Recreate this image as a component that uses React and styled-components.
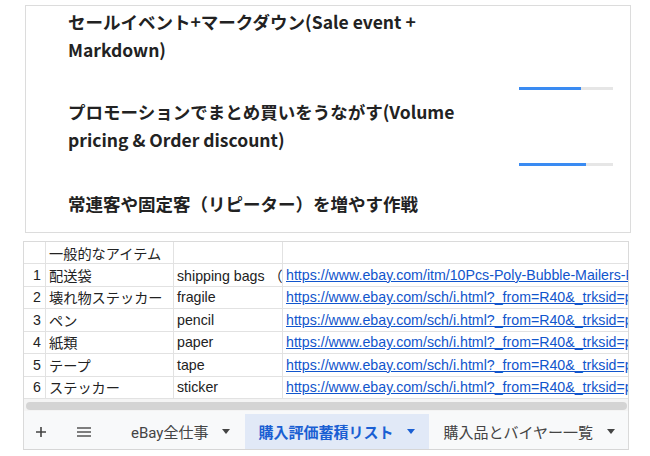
import styled, { createGlobalStyle } from "styled-components";

const GlobalStyle = createGlobalStyle`
  body {
    margin: 0;
    background: #fff;
    font-family: "Liberation Sans", "Noto Sans CJK JP", sans-serif;
  }
`;

const sections = [
  {
    title: "セールイベント+マークダウン(Sale event + Markdown)",
    progress: 66,
    top: 0,
    barGap: 23,
  },
  {
    title: "プロモーションでまとめ買いをうながす(Volume pricing & Order discount)",
    progress: 71,
    top: 8,
    barGap: 9,
  },
  {
    title: "常連客や固定客（リピーター）を増やす作戦",
    top: 24,
  },
];

const rows = [
  { n: 1, ja: "配送袋", en: "shipping bags （緩衝材付き封筒）", url: "https://www.ebay.com/itm/10Pcs-Poly-Bubble-Mailers-Padded-Envelopes" },
  { n: 2, ja: "壊れ物ステッカー", en: "fragile", url: "https://www.ebay.com/sch/i.html?_from=R40&_trksid=p2380057" },
  { n: 3, ja: "ペン", en: "pencil", url: "https://www.ebay.com/sch/i.html?_from=R40&_trksid=p2380057" },
  { n: 4, ja: "紙類", en: "paper", url: "https://www.ebay.com/sch/i.html?_from=R40&_trksid=p2380057" },
  { n: 5, ja: "テープ", en: "tape", url: "https://www.ebay.com/sch/i.html?_from=R40&_trksid=p2380057" },
  { n: 6, ja: "ステッカー", en: "sticker", url: "https://www.ebay.com/sch/i.html?_from=R40&_trksid=p2380057" },
];

const tabs = [
  { label: "eBay全仕事", right: 15 },
  { label: "購入評価蓄積リスト", active: true, right: 14 },
  { label: "購入品とバイヤー一覧", right: 13 },
];

const App = () => {
  return (
    <>
      <GlobalStyle />
      <Page>
        <Card>
          {sections.map((s, i) => (
            <Section key={i} $top={s.top}>
              <Title>{s.title}</Title>
              {s.progress && (
                <BarRow $gap={s.barGap}>
                  <Bar>
                    <BarFill style={{ width: `${s.progress}%` }} />
                  </Bar>
                </BarRow>
              )}
            </Section>
          ))}
        </Card>

        <Sheet>
          <Grid>
            <Row $head>
              <NumCell />
              <Cell>一般的なアイテム</Cell>
              <Cell />
              <Cell />
            </Row>
            {rows.map((r) => (
              <Row key={r.n}>
                <NumCell>{r.n}</NumCell>
                <Cell>{r.ja}</Cell>
                <Cell>{r.en}</Cell>
                <Cell>
                  <LinkText>{r.url}</LinkText>
                </Cell>
              </Row>
            ))}
          </Grid>
          <Track>
            <Thumb />
          </Track>
          <TabBar>
            <IconBtn>
              <svg width="12" height="12" viewBox="0 0 12 12">
                <path d="M6 1v10M1 6h10" stroke="#444" strokeWidth="1.6" />
              </svg>
            </IconBtn>
            <IconBtn>
              <svg width="16" height="12" viewBox="0 0 16 12">
                <path d="M1 2h14M1 6h14M1 10h14" stroke="#555" strokeWidth="1.4" />
              </svg>
            </IconBtn>
            {tabs.map((t) => (
              <Tab key={t.label} $active={t.active} $right={t.right}>
                {t.label}
                <Caret $active={t.active} />
              </Tab>
            ))}
          </TabBar>
        </Sheet>
      </Page>
    </>
  );
};

export default App;

const Page = styled.div`
  width: 650px;
  height: 456px;
  padding-top: 5px;
  box-sizing: border-box;
`;

const Card = styled.div`
  box-sizing: border-box;
  width: 606px;
  height: 228px;
  margin-left: 25px;
  padding: 2px 17px 0 42px;
  border: 1px solid #dcdcdc;
  font-family: "Noto Sans CJK JP", "Noto Sans", sans-serif;
`;

const Section = styled.div`
  display: flex;
  flex-direction: column;
  margin-top: ${(p) => p.$top}px;
`;

const Title = styled.div`
  max-width: 400px;
  font-size: 17.5px;
  line-height: 28px;
  font-weight: 700;
  color: #222;
`;

const BarRow = styled.div`
  display: flex;
  justify-content: flex-end;
  margin-top: ${(p) => p.$gap}px;
`;

const Bar = styled.div`
  width: 94px;
  height: 3px;
  background: #e6e6e6;
`;

const BarFill = styled.div`
  height: 100%;
  background: #3a8bf2;
`;

const Sheet = styled.div`
  box-sizing: border-box;
  width: 606px;
  margin: 8px 0 0 23px;
  border: 1px solid #dadada;
  border-bottom-color: #d6d6d6;
`;

const Grid = styled.div`
  display: flex;
  flex-direction: column;
`;

const Row = styled.div`
  display: grid;
  grid-template-columns: 22px 128px 109px 1fr;
  height: ${(p) => (p.$head ? "22px" : "22.5px")};
  box-sizing: border-box;
  border-bottom: 1px solid #e2e2e2;
  font-size: 14.2px;
  color: #222;
`;

const Cell = styled.div`
  display: flex;
  align-items: center;
  padding: 0 3px;
  border-right: 1px solid #e2e2e2;
  white-space: nowrap;
  overflow: hidden;
  &:last-child {
    border-right: none;
  }
`;

const NumCell = styled(Cell)`
  justify-content: flex-end;
  padding: 0 4px 0 0;
`;

const LinkText = styled.span`
  color: #1155cc;
  text-decoration: underline;
`;

const Track = styled.div`
  height: 12px;
  padding: 3px 1px 1px 2px;
  box-sizing: border-box;
  background: #f4f4f4;
`;

const Thumb = styled.div`
  height: 8px;
  border-radius: 4px;
  background: #d4d4d4;
`;

const TabBar = styled.div`
  display: flex;
  align-items: stretch;
  box-sizing: border-box;
  height: 38px;
  padding: 3px 0 0 4px;
  background: #f8f9fa;
  font-family: "Roboto", "Noto Sans CJK JP", sans-serif;
  font-size: 15px;
`;

const IconBtn = styled.div`
  display: flex;
  align-items: center;
  justify-content: center;
  width: 28px;
  & + & {
    margin-left: 16px;
  }
`;

const Tab = styled.div`
  display: flex;
  align-items: center;
  gap: 14px;
  padding: 0 ${(p) => p.$right}px 0 ${(p) => (p.$active ? "13px" : "14px")};
  background: ${(p) => (p.$active ? "#e1e9f7" : "transparent")};
  color: ${(p) => (p.$active ? "#1a5fd3" : "#444")};
  font-weight: ${(p) => (p.$active ? 700 : 400)};
  white-space: nowrap;
  &:nth-of-type(3) {
    margin-left: 20px;
  }
`;

const Caret = styled.span`
  width: 0;
  height: 0;
  border-left: 4px solid transparent;
  border-right: 4px solid transparent;
  border-top: 5px solid ${(p) => (p.$active ? "#1a5fd3" : "#444")};
`;
